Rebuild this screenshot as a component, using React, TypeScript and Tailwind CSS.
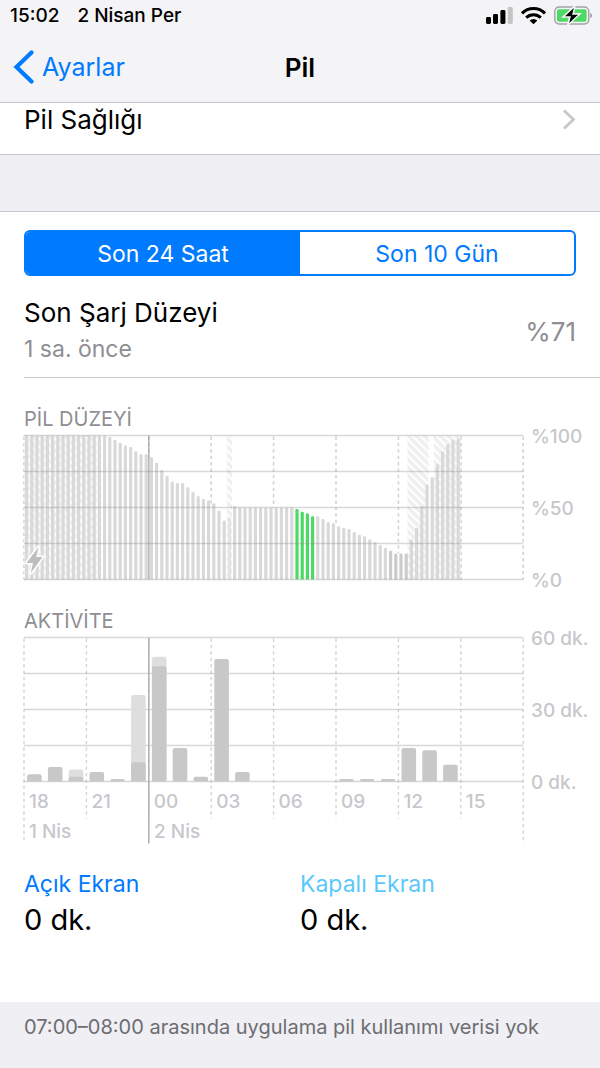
import { useState } from 'react'

const SLOT = 5.2
const HOUR = 20.8
const PLOT_WIDTH = 499.2
const PLOT_HEIGHT = 144

const batteryLevels = [
  100, 100, 100, 100, 100, 100, 100, 100, 100, 100, 100, 100,
  100, 100, 100, 100, 99, 97, 95, 93, 92, 89, 87, 87,
  85, 81, 76, 72, 68, 67, 67, 64, 61, 58, 56, 55,
  53, 48, 41, 43, 51, 50, 50, 50, 50, 50, 50, 50,
  50, 50, 50, 50, 49, 47, 46, 44, 44, 42, 40, 39,
  37, 36, 35, 33, 31, 30, 28, 26, 24, 22, 20, 18,
  18, 18, 28, 36, 51, 66, 71, 80, 89, 94, 97, 98,
]

// [start, end] in 15 minute slots
const chargingSpans = [
  [0, 14],
  [39, 40],
  [73.7, 77.8],
  [78.8, 84],
]

// minutes per hour: screen on, then total with screen off
const activity = [
  [3, 3], [6, 6], [2, 5], [4, 4], [1, 1], [8, 36],
  [48, 52], [14, 14], [2, 2], [51, 51], [4, 4], [0, 0],
  [0, 0], [0, 0], [0, 0], [1, 1], [1, 1], [1, 1],
  [14, 14], [13, 13], [7, 7],
]

const hours = ['18', '21', '00', '03', '06', '09', '12', '15']

function barColor(index: number) {
  if (index >= 52 && index <= 55) return '#4cd964'
  if (index >= 70 && index <= 73) return '#cbcbcb'
  if (index === 39) return '#e4e4e4'
  return '#d9d9d9'
}

function topRounded(x: number, height: number, width: number, radius: number) {
  const r = Math.min(radius, height)
  return `M${x} ${PLOT_HEIGHT}v${-(height - r)}q0 ${-r} ${r} ${-r}h${width - 2 * r}q${r} 0 ${r} ${r}v${height - r}z`
}

function GridLines() {
  return (
    <g stroke="#8e8e93" strokeOpacity="0.34" strokeWidth="1.6">
      {[0, 36, 72, 108, 144].map((y) => (
        <line key={y} x1="0" x2={PLOT_WIDTH} y1={y} y2={y} />
      ))}
    </g>
  )
}

function YLabels({ labels }: { labels: string[] }) {
  return (
    <g fill="#c7c7cc" fontSize="19" fontWeight="500">
      {labels.map((label, index) => (
        <text key={label} x="507" y={index * 72 + 7}>
          {label}
        </text>
      ))}
    </g>
  )
}

function BatteryChart() {
  return (
    <svg viewBox="0 0 576 160" className="block w-full overflow-visible" role="img" aria-label="Pil düzeyi">
      <defs>
        <pattern id="hatch" width="8" height="8" patternUnits="userSpaceOnUse">
          <path d="M-2 -2L10 10M-2 6L2 10M6 -2L10 2" stroke="#efefef" strokeWidth="3.7" />
        </pattern>
      </defs>
      <g transform="translate(0 3.5)">
        {hours.concat('18').map((_, index) => {
          const level = batteryLevels[index * 12] ?? 0
          return (
            <line
              key={index}
              x1={index * HOUR * 3}
              x2={index * HOUR * 3}
              y1="1"
              y2={index === 0 ? PLOT_HEIGHT : PLOT_HEIGHT * (1 - level / 100)}
              stroke="#d4d4d6"
              strokeWidth="1.6"
              strokeDasharray="3.4 3"
            />
          )
        })}
        <line x1="436.8" x2="436.8" y1="1" y2={PLOT_HEIGHT} stroke="#d4d4d6" strokeWidth="1.6" strokeDasharray="3.4 3" />
        {chargingSpans.map(([start, end]) => (
          <rect key={start} x={start * SLOT} y="0" width={(end - start) * SLOT} height={PLOT_HEIGHT} fill="url(#hatch)" />
        ))}
        {batteryLevels.map((level, index) => (
          <path
            key={index}
            d={topRounded(index * SLOT + 1, level * 1.44, 3.2, 1.4)}
            fill={barColor(index)}
          />
        ))}
        <GridLines />
        <line x1="124.8" x2="124.8" y1="0" y2={PLOT_HEIGHT} stroke="#8e8e93" strokeOpacity="0.6" strokeWidth="1.6" />
        <path d="M14.6 111.5L2.5 127.5H9L6.8 137.5L18.5 121.5H12.2Z" fill="#bdbdbf" stroke="#fff" strokeWidth="3" strokeLinejoin="round" paintOrder="stroke" />
        <YLabels labels={['%100', '%50', '%0']} />
      </g>
    </svg>
  )
}

function ActivityChart() {
  return (
    <svg viewBox="0 0 576 210" className="block w-full overflow-visible" role="img" aria-label="Aktivite">
      <g transform="translate(0 3.5)">
        {hours.concat('18').map((_, index) => (
          <line
            key={index}
            x1={index * HOUR * 3}
            x2={index * HOUR * 3}
            y1="1"
            y2={index === 0 || index === 8 ? 206 : 181}
            stroke="#d4d4d6"
            strokeWidth="1.4"
            strokeDasharray="3.4 3"
          />
        ))}
        <GridLines />
        {activity.map(([screenOn, total], index) => (
          <g key={index}>
            {total > screenOn && (
              <path d={topRounded(index * HOUR + 3.1, total * 2.4, 14.6, 2)} fill="#dedede" />
            )}
            {screenOn > 0 && (
              <path d={topRounded(index * HOUR + 3.1, screenOn * 2.4, 14.6, 2)} fill="#c8c8c8" />
            )}
          </g>
        ))}
        <line x1="124.8" x2="124.8" y1="0" y2="206" stroke="#b4b4b6" strokeWidth="1.6" />
        <g fill="#c7c7cc" fontSize="19" fontWeight="500">
          {hours.map((hour, index) => (
            <text key={hour} x={index * HOUR * 3 + 5} y="170">
              {hour}
            </text>
          ))}
          <text x="5" y="200">1 Nis</text>
          <text x="130" y="200">2 Nis</text>
        </g>
        <YLabels labels={['60 dk.', '30 dk.', '0 dk.']} />
      </g>
    </svg>
  )
}

function StatusBar() {
  return (
    <div className="flex h-8 items-center justify-between pr-2 pl-[10px] text-[19px] font-medium">
      <div className="flex gap-[18px] pt-px">
        <span>15:02</span>
        <span>2 Nisan Per</span>
      </div>
      <svg width="106" height="20" viewBox="0 0 106 20" aria-hidden="true">
        <rect x="0" y="11" width="5" height="7" rx="1.4" />
        <rect x="7" y="8" width="5" height="10" rx="1.4" />
        <rect x="14.4" y="4" width="5" height="14" rx="1.4" />
        <rect x="21.8" y="1" width="5" height="17" rx="1.4" fill="#c4c4c6" />
        <g fill="none" stroke="#000" strokeWidth="3.1">
          <path d="M36 7.4a16 16 0 0 1 23 0" />
          <path d="M40.2 11.7a10.4 10.4 0 0 1 14.6 0" />
        </g>
        <path d="M43.6 14.4a5.8 5.8 0 0 1 7.8 0L47.5 18.2z" />
        <rect x="68.8" y="1" width="34" height="17" rx="4.4" fill="none" stroke="#a2a2a4" strokeWidth="1.4" />
        <path d="M104.2 7.2q2 .6 2 2.4t-2 2.4z" fill="#a2a2a4" />
        <rect x="71" y="3.2" width="29.6" height="12.6" rx="2" fill="#4cd964" />
        <path d="M88.5 .5L77.5 10.8H84L82 18.5L93.5 8H87z" stroke="#f4f4f6" strokeWidth="2" />
        <path d="M87.8 2L79 10.2H85L83.2 17L92 8.7H86z" />
      </svg>
    </div>
  )
}

export default function App() {
  const [range, setRange] = useState('24h')

  return (
    <div className="min-h-screen bg-[#efeff4] font-['Inter','Liberation_Sans',sans-serif] text-black">
      <header className="border-b border-[#c8c7cc] bg-[#f4f4f6]">
        <StatusBar />
        <nav className="grid h-[70px] grid-cols-3 items-center px-3">
          <a href="#ayarlar" className="flex items-center gap-2 text-[25px] text-[#007aff]">
            <svg width="22" height="34" viewBox="0 0 22 34" aria-hidden="true">
              <path d="M19.5 2.5L4.5 17L19.5 31.5" fill="none" stroke="currentColor" strokeWidth="4.2" strokeLinecap="round" />
            </svg>
            <span className="pt-0.5">Ayarlar</span>
          </a>
          <h1 className="text-center text-[26px] font-semibold">Pil</h1>
        </nav>
      </header>

      <main>
        <a href="#pil-sagligi" className="flex h-[52px] items-start justify-between border-b border-[#c8c7cc] bg-white pr-6 pl-6 text-[26px] leading-[34px]">
          Pil Sağlığı
          <svg width="14" height="34" viewBox="0 0 14 34" aria-hidden="true">
            <path d="M2 7.5L11.5 16.5L2 25.5" fill="none" stroke="#c7c7cc" strokeWidth="2.8" />
          </svg>
        </a>

        <section className="mt-14 border-t border-[#c8c7cc] bg-white pt-[18px] pb-16 pl-6">
          <div className="mr-6 grid h-[46px] grid-cols-2 overflow-hidden rounded-md border-2 border-[#007aff] text-[23px]">
            <button
              type="button"
              aria-pressed={range === '24h'}
              onClick={() => setRange('24h')}
              className={range === '24h' ? 'bg-[#007aff] pt-0.5 text-white' : 'pt-0.5 text-[#007aff]'}
            >
              Son 24 Saat
            </button>
            <button
              type="button"
              aria-pressed={range === '10d'}
              onClick={() => setRange('10d')}
              className={range === '10d' ? 'bg-[#007aff] pt-0.5 text-white' : 'pt-0.5 text-[#007aff]'}
            >
              Son 10 Gün
            </button>
          </div>

          <div className="flex items-center justify-between border-b border-[#c8c7cc] pt-[19px] pr-6 pb-[10px]">
            <div>
              <h2 className="text-[26px] leading-9">Son Şarj Düzeyi</h2>
              <p className="text-[23px] leading-9 text-[#8e8e93]">1 sa. önce</p>
            </div>
            <span className="text-[26px] text-[#8e8e93]">%71</span>
          </div>

          <h3 className="mt-7 text-[20px] leading-[26px] text-[#8e8e93]">PİL DÜZEYİ</h3>
          <BatteryChart />

          <h3 className="mt-4 text-[20px] leading-[26px] text-[#8e8e93]">AKTİVİTE</h3>
          <ActivityChart />

          <dl className="mt-[22px] mr-6 grid grid-cols-2">
            <div>
              <dt className="text-[23px] leading-9 text-[#007aff]">Açık Ekran</dt>
              <dd className="text-[29px] leading-9">0 dk.</dd>
            </div>
            <div>
              <dt className="text-[23px] leading-9 text-[#5ac8fa]">Kapalı Ekran</dt>
              <dd className="text-[29px] leading-9">0 dk.</dd>
            </div>
          </dl>
        </section>

        <p className="px-6 py-[11px] text-[20px] leading-7 text-[#6d6d72]">
          07:00–08:00 arasında uygulama pil kullanımı verisi yok
        </p>
      </main>
    </div>
  )
}
